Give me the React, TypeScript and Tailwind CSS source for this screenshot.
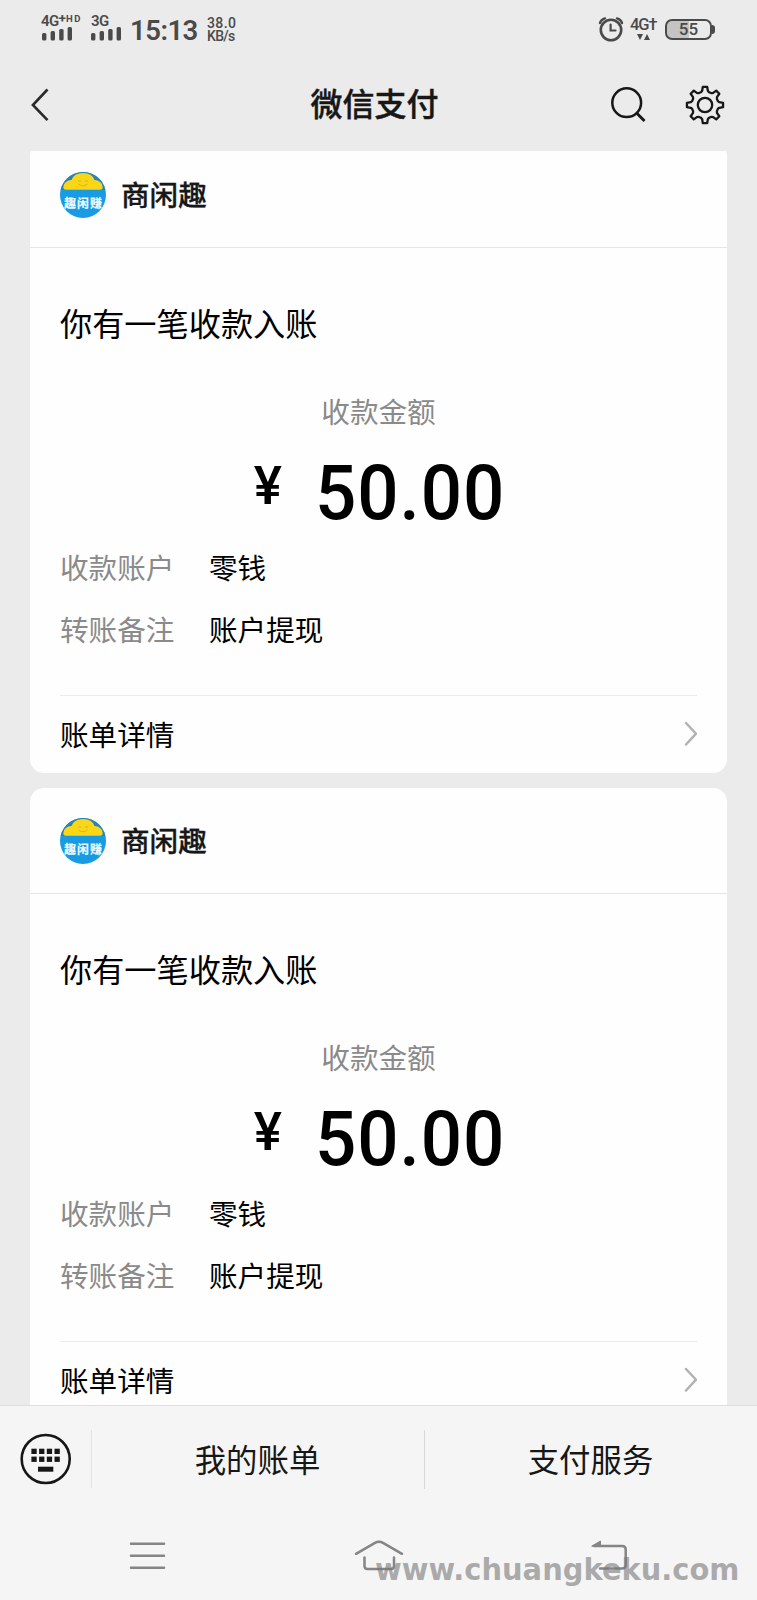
type Transfer = {
  id: number;
  merchant: string;
  amount: string;
  account: string;
  remark: string;
};

const transfers: Transfer[] = [
  { id: 1, merchant: '商闲趣', amount: '50.00', account: '零钱', remark: '账户提现' },
  { id: 2, merchant: '商闲趣', amount: '50.00', account: '零钱', remark: '账户提现' },
];

const gearPath = () => {
  const point = (radius: number, deg: number) => {
    const a = ((deg - 90) * Math.PI) / 180;
    return `${(20 + radius * Math.cos(a)).toFixed(2)} ${(20 + radius * Math.sin(a)).toFixed(2)}`;
  };
  let d = '';
  for (let i = 0; i < 8; i++) {
    const c = i * 45;
    d += `${i === 0 ? 'M' : 'L'}${point(14.6, c - 11)} L${point(18.2, c - 7)} L${point(18.2, c + 7)} L${point(14.6, c + 11)} Q${point(13.6, c + 15)} ${point(13.4, c + 18)} L${point(13.4, c + 27)} Q${point(13.6, c + 30)} ${point(14.6, c + 34)} `;
  }
  return d + 'Z';
};

const SignalBars = () => (
  <svg width="30" height="14" viewBox="0 0 30 14" fill="#4a4a4a">
    <rect x="0" y="6" width="4.4" height="7.5" rx="1.5" />
    <rect x="8.6" y="4" width="4.4" height="9.5" rx="1.5" />
    <rect x="17.2" y="2" width="4.4" height="11.5" rx="1.5" />
    <rect x="25.6" y="0" width="4.4" height="13.5" rx="1.5" />
  </svg>
);

const StatusBar = () => (
  <div className="flex h-[60px] items-start pl-[42px] font-[Roboto,sans-serif] text-[#4a4a4a]">
    <div className="w-[49px] pt-[14px]">
      <div className="flex h-[13px] whitespace-nowrap text-[15px] leading-[14px] font-semibold">
        <span className="-ml-px tracking-[-0.5px]">4G</span>
        <span className="text-[13px] leading-[9px] font-bold">+</span>
        <span className="text-[9.5px] leading-[9px] font-bold tracking-[1.6px]">HD</span>
      </div>
      <SignalBars />
    </div>
    <div className="w-[39px] pt-[14px]">
      <div className="h-[13px] text-[15px] leading-[14px] font-semibold tracking-[-0.5px]">3G</div>
      <SignalBars />
    </div>
    <div className="w-[77px] pt-[15px] text-[27.5px] leading-8 font-semibold tracking-[-0.5px]">15:13</div>
    <div className="pt-[17px] text-[14px] leading-[13px] font-medium">
      <div className="tracking-[0.4px]">38.0</div>
      <div className="tracking-[-0.7px]">KB/s</div>
    </div>
    <div className="mr-[42px] ml-auto flex pt-[16px]">
      <svg width="26" height="28" viewBox="0 0 26 28" fill="none" stroke="#4a4a4a" strokeLinecap="round">
        <circle cx="13" cy="14" r="10.2" strokeWidth="2.6" />
        <path d="M12.6 8.5 V14.5 H17.5" strokeWidth="2.2" />
        <path d="M2 7 Q3 3.5 7 2.4 M24 7 Q23 3.5 19 2.4" strokeWidth="2.4" />
      </svg>
      <div className="ml-[6px] w-[28px]">
        <div className="h-[17px] text-[16.5px] leading-[18px] font-medium whitespace-nowrap tracking-[-1.1px]">4G†</div>
        <svg width="14" height="8" viewBox="0 0 14 8" className="ml-[7px]" fill="#4a4a4a">
          <path d="M0 1 H6 L3 7 Z M7 7 H13 L10 1 Z" />
        </svg>
      </div>
      <div className="ml-[7px] flex pt-[3px]">
        <div className="flex h-[21px] w-[47px] items-center justify-center rounded-[7px] border-2 border-[#4a4a4a] bg-linear-to-r from-[#c4c4c4] from-50% to-[#ebebeb] to-50% text-[17px] leading-none font-medium">
          55
        </div>
        <div className="mt-[6px] h-[9px] w-[3px] rounded-r bg-[#4a4a4a]" />
      </div>
    </div>
  </div>
);

const Header = () => (
  <div className="flex h-[91px] items-start justify-between pr-[32px] pl-[30px]">
    <svg width="96" height="90" viewBox="0 0 96 90" fill="none" stroke="#2a2a2a" strokeWidth="2.6">
      <path d="M17.5 29.5 L2.9 45 L17.5 60.2" />
    </svg>
    <h1 className="pt-[18px] pl-[13px] text-[32px] leading-[48px] font-medium text-[#171717] [-webkit-text-stroke:0.4px]">
      微信支付
    </h1>
    <div className="flex gap-[37px] pt-[24px]">
      <svg width="38" height="40" viewBox="0 0 38 40" fill="none" stroke="#171717" strokeWidth="2.5">
        <circle cx="16.7" cy="18.7" r="14.4" />
        <path d="M26.6 29 L34.5 37" strokeWidth="2.9" />
      </svg>
      <svg width="40" height="40" viewBox="0 0 40 40" className="mt-px" fill="none" stroke="#171717" strokeWidth="2.3" strokeLinejoin="round">
        <path d={gearPath()} />
        <circle cx="20" cy="20" r="7.2" />
      </svg>
    </div>
  </div>
);

const MerchantLogo = () => (
  <svg width="46" height="46" viewBox="0 0 46 46">
    <defs>
      <clipPath id="logo">
        <circle cx="23" cy="23" r="23" />
      </clipPath>
    </defs>
    <g clipPath="url(#logo)">
      <rect width="46" height="46" fill="#189be3" />
      <rect width="46" height="18" fill="#2b83b5" />
      <path
        d="M6 17.8 Q3 17.8 3.4 14.5 Q4.5 8.5 11.5 8 Q14 1 23 1 Q32 1 34.5 8 Q41.5 8.5 42.6 14.5 Q43 17.8 40 17.8 Z"
        fill="#fad716"
      />
      <path d="M18 9 h3 M25 9 h3 M18.5 12 Q23 15.5 27.5 12" fill="none" stroke="#dfb01d" strokeWidth="1" />
      <text x="23.5" y="36" textAnchor="middle" fontSize="12" fontWeight="900" letterSpacing="1" fill="#e6f7ff">
        趣闲赚
      </text>
    </g>
  </svg>
);

const Row = ({ label, value }: { label: string; value: string }) => (
  <div className="flex h-[62px] items-center text-[28.6px] leading-none">
    <span className="w-[149px] text-[#8a8a8a]">{label}</span>
    <span>{value}</span>
  </div>
);

const TransferCard = ({ merchant, amount, account, remark }: Transfer) => (
  <div className="h-[631px] shrink-0 rounded-[14px] bg-[#fefefe] text-black">
    <div className="flex h-[106px] items-center border-b border-[#e6e6e6] pl-[30px]">
      <MerchantLogo />
      <span className="ml-[15px] text-[28.6px] leading-none font-medium text-[#171717] [-webkit-text-stroke:0.3px]">
        {merchant}
      </span>
    </div>
    <div className="px-[30px]">
      <div className="pt-[50px] text-[32.2px] leading-[48px]">你有一笔收款入账</div>
      <div className="mt-[45px] text-center text-[28.6px] leading-[40px] text-[#8a8a8a]">收款金额</div>
      <div className="flex h-[105px] items-start justify-center font-[Roboto,sans-serif] leading-none font-medium">
        <span className="mt-[29px] ml-[7px] text-[53px]">¥</span>
        <span className="mt-[24px] ml-[28px] scale-x-[0.95] text-[76.5px] tracking-[1px]">{amount}</span>
      </div>
      <Row label="收款账户" value={account} />
      <Row label="转账备注" value={remark} />
      <div className="mt-[35px] flex h-[77px] items-start justify-between border-t border-[#ebebeb] pt-[24px]">
        <span className="text-[28.6px] leading-none">账单详情</span>
        <svg width="14" height="26" viewBox="0 0 14 26" fill="none" stroke="#b2b2b2" strokeWidth="2.5" strokeLinecap="round">
          <path d="M3 3 L13 13.7 L3 24.5" />
        </svg>
      </div>
    </div>
  </div>
);

const MenuBar = () => (
  <div className="flex h-[106px] items-center text-[31.4px] leading-none text-[#171717]">
    <svg width="52" height="52" viewBox="0 0 52 52" className="ml-[20px]" fill="#171717">
      <circle cx="25.7" cy="26" r="24" fill="none" stroke="#171717" strokeWidth="2.6" />
      {[11.4, 19.1, 26.8, 34.5].map((x) => (
        <g key={x}>
          <rect x={x} y="15.7" width="5.3" height="5.3" />
          <rect x={x} y="23.6" width="5.3" height="5.3" />
        </g>
      ))}
      <rect x="18" y="33.7" width="15.3" height="5" />
    </svg>
    <div className="ml-[19px] h-[58px] w-px bg-[#e2e2e2]" />
    <div className="w-[332px] pr-px text-center">我的账单</div>
    <div className="h-[59px] w-px bg-[#d8d8d8]" />
    <div className="flex-1 pr-px text-center">支付服务</div>
  </div>
);

const NavBar = () => (
  <div className="relative flex h-[88px] items-start pt-[24px]">
    <svg width="757" height="50" viewBox="0 0 757 50" fill="none" stroke="#858585" strokeWidth="2.5" strokeLinecap="round">
      <path d="M131 7.7 H164 M131 19.7 H164 M131 31.7 H164" />
      <path d="M356 17.8 L375 6.8 Q379 4.6 383 6.8 L402 17.8" />
      <path d="M364.5 21.5 V30 Q364.5 33 367.5 33 H391 Q394 33 394 30 V21.5" />
      <path d="M600 32.5 H622 Q625.7 32.5 625.7 29 V13.5 Q625.7 10 622 10 H594" />
      <path d="M592 10 L600.5 5 V10 Z" fill="#858585" strokeWidth="1" />
    </svg>
    <div className="absolute top-[37px] left-[375px] origin-left scale-x-[0.933] font-['DejaVu_Sans',sans-serif] text-[31px] leading-[40px] font-bold whitespace-nowrap text-[#777777]/60">
      www.chuangkeku.com
    </div>
  </div>
);

const App = () => {
  return (
    <div className="flex h-[1600px] w-[757px] flex-col overflow-hidden bg-[#ebebeb] font-['Noto_Sans_CJK_SC',sans-serif]">
      <StatusBar />
      <Header />
      <div className="h-[1254px] overflow-hidden px-[30px]">
        <div className="-mt-[9px] flex flex-col gap-[15px]">
          {transfers.map((transfer) => (
            <TransferCard key={transfer.id} {...transfer} />
          ))}
        </div>
      </div>
      <div className="h-[195px] border-t border-[#dedede] bg-[#f5f5f5]">
        <MenuBar />
        <NavBar />
      </div>
    </div>
  );
};

export default App;
